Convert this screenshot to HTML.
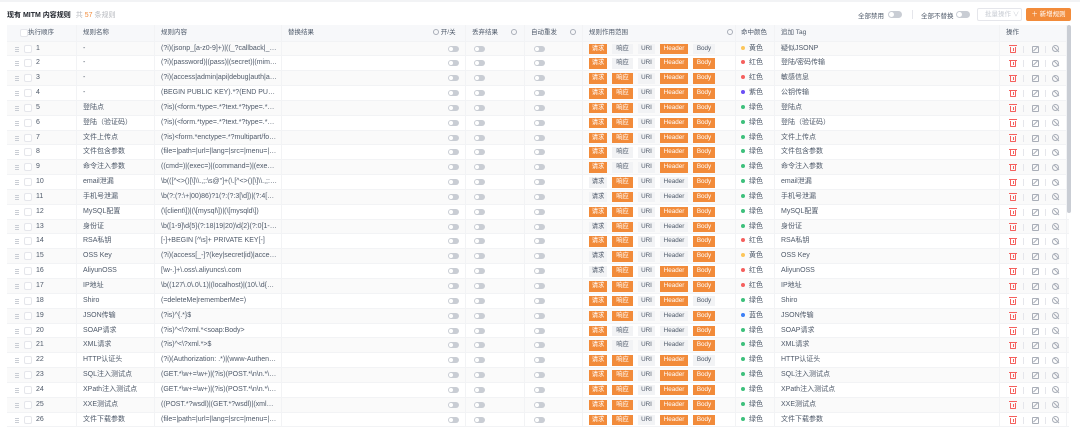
<!DOCTYPE html>
<html><head><meta charset="utf-8"><style>
*{box-sizing:border-box;margin:0;padding:0}
i,em{font-style:normal}
body{width:1080px;height:424px;overflow:hidden;background:#fff;font-family:"Liberation Sans","Noto Sans CJK SC",sans-serif;font-size:7px;color:#1d2129;position:relative}
.top{position:absolute;left:0;top:0;width:1080px;height:2px;background:#f2f3f5}
.title{position:absolute;left:7px;top:10px;font-size:7px;font-weight:bold;color:#1d2129}
.title span{font-weight:normal;color:#b5b8be;margin-left:5px}
.title em{color:#f28b3a}
.tr{position:absolute;top:10px;font-size:6.5px;color:#4e5969}
.sw{position:absolute;width:14px;height:7px;border-radius:4px;background:#c9cdd4}
.sw:after{content:"";position:absolute;left:1px;top:1px;width:5px;height:5px;border-radius:50%;background:#fff}
.batch{position:absolute;left:977px;top:8px;width:45px;height:13px;border:1px solid #e5e6eb;border-radius:2px;color:#c9cdd4;font-size:6.5px;line-height:11px;padding-left:7px}
.add{position:absolute;left:1026px;top:8px;width:45px;height:13px;background:#f28b3a;border-radius:2px;color:#fff;font-size:6.5px;line-height:13px;text-align:center}
.tbl{position:absolute;left:7px;top:25px;width:1062px}
.h,.r{display:flex;position:relative;border-bottom:1px solid #f2f3f5}
.h{height:16.5px;background:#f7f8fa;color:#4e5969;font-size:6.5px;line-height:15.5px}
.r{height:14.85px;line-height:13.8px;color:#4e5969}
.r:nth-child(odd){background:#fafafa}
.h>span,.r>span{display:block;height:100%;position:relative;white-space:nowrap;overflow:hidden;border-right:1px solid #f2f3f5}
.c{text-overflow:ellipsis;padding-right:4px}
.a{width:70px}.b{width:78px;padding-left:6px}.c{width:127px;padding-left:6px}.d{width:184px;padding-left:6px}.e{width:59px}.f{width:58px}.g{width:153px;padding-left:6px}.hh{width:39px;padding-left:5px}.k{width:225px;padding-left:6px}.l{width:67px}
.h .a{padding-left:21px}
.dr{position:absolute;left:8px;top:5px;width:4px;height:5px;border-top:1px solid #c9cdd4;border-bottom:1px solid #c9cdd4}
.dr:after{content:"";position:absolute;left:0;top:1px;width:4px;height:1px;background:#c9cdd4}
.cb{position:absolute;left:17px;top:3px;width:8px;height:8px;border:1px solid #e5e6eb;border-radius:2px;background:#fff}
.h .cb{left:13px;top:4px}
.n{position:absolute;left:29px}
.tg{position:absolute;top:4px;width:11px;height:6px;border-radius:3px;background:#c9cdd4}
.tg:after{content:"";position:absolute;left:1px;top:1px;width:4px;height:4px;border-radius:50%;background:#fff}
.d .tg{left:166px}.e .tg{left:8px}.f .tg{left:9px}
.q{display:inline-block;width:6px;height:6px;border:1px solid #a9aeb8;border-radius:50%;vertical-align:-1px}
.g b{display:inline-block;font-weight:normal;height:10.5px;line-height:10.5px;margin-top:2px;text-align:center;margin-right:5px;background:#f2f3f5;color:#4e5969;font-size:6.3px;vertical-align:top}
.g b.o{background:#f28b3a;color:#fff}
.w1{width:18px}.w2{width:21px}.w3{width:17px}.w4{width:28px}.w5{width:22px}
.dot{display:inline-block;width:4px;height:4px;border-radius:50%;margin-right:4px;vertical-align:0}
.Y{background:#fcc65b}.R{background:#f5605e}.P{background:#6b4ff5}.G{background:#3ec07c}.B{background:#3d7ff5}
.tr1{position:absolute;left:10px;top:5px;width:6px;height:6px;border:1px solid #f5605e;border-top:none;border-radius:0 0 1px 1px}
.tr1:before{content:"";position:absolute;left:-2px;top:-1.5px;width:8px;height:1px;background:#f5605e}
.tr1:after{content:"";position:absolute;left:1.5px;top:1px;width:1px;height:3px;background:#f5605e}
.ed{position:absolute;left:32px;top:4px;width:7px;height:7px;border:1px solid #a9aeb8;border-radius:1px}
.ed:after{content:"";position:absolute;left:2px;top:-1px;width:1px;height:6px;background:#a9aeb8;transform:rotate(45deg)}
.bn{position:absolute;left:52px;top:3.5px;width:7px;height:7px;border:1px solid #a9aeb8;border-radius:50%}
.bn:after{content:"";position:absolute;left:2.5px;top:-0.5px;width:1px;height:7px;background:#a9aeb8;transform:rotate(-45deg)}
.s1,.s2{position:absolute;top:4px;width:1px;height:7px;background:#e5e6eb}
.s1{left:23px}.s2{left:45px}
.sb{position:absolute;left:1067px;top:25px;width:4px;height:188px;border-radius:2px;background:#c9cdd4}
</style></head><body>
<div class="top"></div>
<div class="title">现有 MITM 内容规则<span>共 <em>57</em> 条规则</span></div>
<div class="tr" style="left:858px">全部禁用</div><div class="sw" style="left:888px;top:11px"></div>
<div style="position:absolute;left:912px;top:10px;width:1px;height:9px;background:#e5e6eb"></div>
<div class="tr" style="left:921px">全部不替换</div><div class="sw" style="left:956px;top:11px"></div>
<div class="batch">批量操作 ∨</div>
<div class="add">＋ 新增规则</div>
<div class="tbl">
<div class="h"><span class="a"><i class="cb"></i>执行顺序</span><span class="b">规则名称</span><span class="c">规则内容</span><span class="d">替换结果<em style="position:absolute;left:151px"><i class="q"></i> 开/关</em></span><span class="e" style="padding-left:6px">丢弃结果 <i class="q" style="margin-left:11px"></i></span><span class="f" style="padding-left:6px">自动重发 <i class="q" style="margin-left:11px"></i></span><span class="g">规则作用范围<i class="q" style="position:absolute;right:2px;top:4px"></i></span><span class="hh">命中颜色</span><span class="k">追加 Tag</span><span class="l" style="padding-left:6px">操作</span></div>
<div id="rows">
<div class="r"><span class="a"><i class="dr"></i><i class="cb"></i><i class="n">1</i></span><span class="b">-</span><span class="c">(?i)(jsonp_[a-z0-9]+)|((_?callback|_cb|_c...</span><span class="d"><i class="tg"></i></span><span class="e"><i class="tg"></i></span><span class="f"><i class="tg"></i></span><span class="g"><b class="w1 o">请求</b><b class="w2">响应</b><b class="w3">URI</b><b class="w4 o">Header</b><b class="w5">Body</b></span><span class="hh"><i class="dot Y"></i>黄色</span><span class="k">疑似JSONP</span><span class="l"><i class="tr1"></i><i class="s1"></i><i class="ed"></i><i class="s2"></i><i class="bn"></i></span></div>
<div class="r"><span class="a"><i class="dr"></i><i class="cb"></i><i class="n">2</i></span><span class="b">-</span><span class="c">(?i)(password)|(pass)|(secret)|(mima)|(['"...</span><span class="d"><i class="tg"></i></span><span class="e"><i class="tg"></i></span><span class="f"><i class="tg"></i></span><span class="g"><b class="w1 o">请求</b><b class="w2">响应</b><b class="w3">URI</b><b class="w4 o">Header</b><b class="w5 o">Body</b></span><span class="hh"><i class="dot R"></i>红色</span><span class="k">登陆/密码传输</span><span class="l"><i class="tr1"></i><i class="s1"></i><i class="ed"></i><i class="s2"></i><i class="bn"></i></span></div>
<div class="r"><span class="a"><i class="dr"></i><i class="cb"></i><i class="n">3</i></span><span class="b">-</span><span class="c">(?i)(access|admin|api|debug|auth|auth...</span><span class="d"><i class="tg"></i></span><span class="e"><i class="tg"></i></span><span class="f"><i class="tg"></i></span><span class="g"><b class="w1 o">请求</b><b class="w2 o">响应</b><b class="w3">URI</b><b class="w4 o">Header</b><b class="w5 o">Body</b></span><span class="hh"><i class="dot R"></i>红色</span><span class="k">敏感信息</span><span class="l"><i class="tr1"></i><i class="s1"></i><i class="ed"></i><i class="s2"></i><i class="bn"></i></span></div>
<div class="r"><span class="a"><i class="dr"></i><i class="cb"></i><i class="n">4</i></span><span class="b">-</span><span class="c">(BEGIN PUBLIC KEY).*?(END PUBLIC KEY)</span><span class="d"><i class="tg"></i></span><span class="e"><i class="tg"></i></span><span class="f"><i class="tg"></i></span><span class="g"><b class="w1 o">请求</b><b class="w2 o">响应</b><b class="w3">URI</b><b class="w4 o">Header</b><b class="w5 o">Body</b></span><span class="hh"><i class="dot P"></i>紫色</span><span class="k">公钥传输</span><span class="l"><i class="tr1"></i><i class="s1"></i><i class="ed"></i><i class="s2"></i><i class="bn"></i></span></div>
<div class="r"><span class="a"><i class="dr"></i><i class="cb"></i><i class="n">5</i></span><span class="b">登陆点</span><span class="c">(?is)(&lt;form.*type=.*?text.*?type=.*?pas...</span><span class="d"><i class="tg"></i></span><span class="e"><i class="tg"></i></span><span class="f"><i class="tg"></i></span><span class="g"><b class="w1 o">请求</b><b class="w2 o">响应</b><b class="w3">URI</b><b class="w4 o">Header</b><b class="w5 o">Body</b></span><span class="hh"><i class="dot G"></i>绿色</span><span class="k">登陆点</span><span class="l"><i class="tr1"></i><i class="s1"></i><i class="ed"></i><i class="s2"></i><i class="bn"></i></span></div>
<div class="r"><span class="a"><i class="dr"></i><i class="cb"></i><i class="n">6</i></span><span class="b">登陆（验证码）</span><span class="c">(?is)(&lt;form.*type=.*?text.*?type=.*?pas...</span><span class="d"><i class="tg"></i></span><span class="e"><i class="tg"></i></span><span class="f"><i class="tg"></i></span><span class="g"><b class="w1 o">请求</b><b class="w2 o">响应</b><b class="w3">URI</b><b class="w4 o">Header</b><b class="w5 o">Body</b></span><span class="hh"><i class="dot G"></i>绿色</span><span class="k">登陆（验证码）</span><span class="l"><i class="tr1"></i><i class="s1"></i><i class="ed"></i><i class="s2"></i><i class="bn"></i></span></div>
<div class="r"><span class="a"><i class="dr"></i><i class="cb"></i><i class="n">7</i></span><span class="b">文件上传点</span><span class="c">(?is)&lt;form.*enctype=.*?multipart/form...</span><span class="d"><i class="tg"></i></span><span class="e"><i class="tg"></i></span><span class="f"><i class="tg"></i></span><span class="g"><b class="w1 o">请求</b><b class="w2 o">响应</b><b class="w3">URI</b><b class="w4 o">Header</b><b class="w5 o">Body</b></span><span class="hh"><i class="dot G"></i>绿色</span><span class="k">文件上传点</span><span class="l"><i class="tr1"></i><i class="s1"></i><i class="ed"></i><i class="s2"></i><i class="bn"></i></span></div>
<div class="r"><span class="a"><i class="dr"></i><i class="cb"></i><i class="n">8</i></span><span class="b">文件包含参数</span><span class="c">(file=|path=|url=|lang=|src=|menu=|m...</span><span class="d"><i class="tg"></i></span><span class="e"><i class="tg"></i></span><span class="f"><i class="tg"></i></span><span class="g"><b class="w1 o">请求</b><b class="w2">响应</b><b class="w3">URI</b><b class="w4 o">Header</b><b class="w5 o">Body</b></span><span class="hh"><i class="dot G"></i>绿色</span><span class="k">文件包含参数</span><span class="l"><i class="tr1"></i><i class="s1"></i><i class="ed"></i><i class="s2"></i><i class="bn"></i></span></div>
<div class="r"><span class="a"><i class="dr"></i><i class="cb"></i><i class="n">9</i></span><span class="b">命令注入参数</span><span class="c">((cmd=)|(exec=)|(command=)|(execute...</span><span class="d"><i class="tg"></i></span><span class="e"><i class="tg"></i></span><span class="f"><i class="tg"></i></span><span class="g"><b class="w1 o">请求</b><b class="w2">响应</b><b class="w3">URI</b><b class="w4 o">Header</b><b class="w5 o">Body</b></span><span class="hh"><i class="dot G"></i>绿色</span><span class="k">命令注入参数</span><span class="l"><i class="tr1"></i><i class="s1"></i><i class="ed"></i><i class="s2"></i><i class="bn"></i></span></div>
<div class="r"><span class="a"><i class="dr"></i><i class="cb"></i><i class="n">10</i></span><span class="b">email泄漏</span><span class="c">\b(([^&lt;&gt;()[\]\\.,;:\s@"]+(\.[^&lt;&gt;()[\]\\.,;:\...</span><span class="d"><i class="tg"></i></span><span class="e"><i class="tg"></i></span><span class="f"><i class="tg"></i></span><span class="g"><b class="w1">请求</b><b class="w2 o">响应</b><b class="w3">URI</b><b class="w4">Header</b><b class="w5 o">Body</b></span><span class="hh"><i class="dot G"></i>绿色</span><span class="k">email泄漏</span><span class="l"><i class="tr1"></i><i class="s1"></i><i class="ed"></i><i class="s2"></i><i class="bn"></i></span></div>
<div class="r"><span class="a"><i class="dr"></i><i class="cb"></i><i class="n">11</i></span><span class="b">手机号泄漏</span><span class="c">\b(?:(?:\+|00)86)?1(?:(?:3[\d])|(?:4[5-79])...</span><span class="d"><i class="tg"></i></span><span class="e"><i class="tg"></i></span><span class="f"><i class="tg"></i></span><span class="g"><b class="w1">请求</b><b class="w2 o">响应</b><b class="w3">URI</b><b class="w4">Header</b><b class="w5 o">Body</b></span><span class="hh"><i class="dot G"></i>绿色</span><span class="k">手机号泄漏</span><span class="l"><i class="tr1"></i><i class="s1"></i><i class="ed"></i><i class="s2"></i><i class="bn"></i></span></div>
<div class="r"><span class="a"><i class="dr"></i><i class="cb"></i><i class="n">12</i></span><span class="b">MySQL配置</span><span class="c">(\[client\])|(\[mysql\])|(\[mysqld\])</span><span class="d"><i class="tg"></i></span><span class="e"><i class="tg"></i></span><span class="f"><i class="tg"></i></span><span class="g"><b class="w1 o">请求</b><b class="w2 o">响应</b><b class="w3">URI</b><b class="w4 o">Header</b><b class="w5 o">Body</b></span><span class="hh"><i class="dot G"></i>绿色</span><span class="k">MySQL配置</span><span class="l"><i class="tr1"></i><i class="s1"></i><i class="ed"></i><i class="s2"></i><i class="bn"></i></span></div>
<div class="r"><span class="a"><i class="dr"></i><i class="cb"></i><i class="n">13</i></span><span class="b">身份证</span><span class="c">\b([1-9]\d{5}(?:18|19|20)\d{2}(?:0[1-9]|10...</span><span class="d"><i class="tg"></i></span><span class="e"><i class="tg"></i></span><span class="f"><i class="tg"></i></span><span class="g"><b class="w1">请求</b><b class="w2 o">响应</b><b class="w3">URI</b><b class="w4">Header</b><b class="w5 o">Body</b></span><span class="hh"><i class="dot G"></i>绿色</span><span class="k">身份证</span><span class="l"><i class="tr1"></i><i class="s1"></i><i class="ed"></i><i class="s2"></i><i class="bn"></i></span></div>
<div class="r"><span class="a"><i class="dr"></i><i class="cb"></i><i class="n">14</i></span><span class="b">RSA私钥</span><span class="c">[-]+BEGIN [^\s]+ PRIVATE KEY[-]</span><span class="d"><i class="tg"></i></span><span class="e"><i class="tg"></i></span><span class="f"><i class="tg"></i></span><span class="g"><b class="w1 o">请求</b><b class="w2 o">响应</b><b class="w3">URI</b><b class="w4">Header</b><b class="w5 o">Body</b></span><span class="hh"><i class="dot R"></i>红色</span><span class="k">RSA私钥</span><span class="l"><i class="tr1"></i><i class="s1"></i><i class="ed"></i><i class="s2"></i><i class="bn"></i></span></div>
<div class="r"><span class="a"><i class="dr"></i><i class="cb"></i><i class="n">15</i></span><span class="b">OSS Key</span><span class="c">(?i)(access[_-]?(key|secret|id)|accesskey(...</span><span class="d"><i class="tg"></i></span><span class="e"><i class="tg"></i></span><span class="f"><i class="tg"></i></span><span class="g"><b class="w1">请求</b><b class="w2 o">响应</b><b class="w3">URI</b><b class="w4">Header</b><b class="w5 o">Body</b></span><span class="hh"><i class="dot Y"></i>黄色</span><span class="k">OSS Key</span><span class="l"><i class="tr1"></i><i class="s1"></i><i class="ed"></i><i class="s2"></i><i class="bn"></i></span></div>
<div class="r"><span class="a"><i class="dr"></i><i class="cb"></i><i class="n">16</i></span><span class="b">AliyunOSS</span><span class="c">[\w-.]+\.oss\.aliyuncs\.com</span><span class="d"><i class="tg"></i></span><span class="e"><i class="tg"></i></span><span class="f"><i class="tg"></i></span><span class="g"><b class="w1">请求</b><b class="w2 o">响应</b><b class="w3">URI</b><b class="w4 o">Header</b><b class="w5 o">Body</b></span><span class="hh"><i class="dot R"></i>红色</span><span class="k">AliyunOSS</span><span class="l"><i class="tr1"></i><i class="s1"></i><i class="ed"></i><i class="s2"></i><i class="bn"></i></span></div>
<div class="r"><span class="a"><i class="dr"></i><i class="cb"></i><i class="n">17</i></span><span class="b">IP地址</span><span class="c">\b((127\.0\.0\.1)|(localhost)|(10\.\d{1,3}\...</span><span class="d"><i class="tg"></i></span><span class="e"><i class="tg"></i></span><span class="f"><i class="tg"></i></span><span class="g"><b class="w1 o">请求</b><b class="w2 o">响应</b><b class="w3">URI</b><b class="w4 o">Header</b><b class="w5 o">Body</b></span><span class="hh"><i class="dot R"></i>红色</span><span class="k">IP地址</span><span class="l"><i class="tr1"></i><i class="s1"></i><i class="ed"></i><i class="s2"></i><i class="bn"></i></span></div>
<div class="r"><span class="a"><i class="dr"></i><i class="cb"></i><i class="n">18</i></span><span class="b">Shiro</span><span class="c">(=deleteMe|rememberMe=)</span><span class="d"><i class="tg"></i></span><span class="e"><i class="tg"></i></span><span class="f"><i class="tg"></i></span><span class="g"><b class="w1 o">请求</b><b class="w2 o">响应</b><b class="w3">URI</b><b class="w4 o">Header</b><b class="w5">Body</b></span><span class="hh"><i class="dot G"></i>绿色</span><span class="k">Shiro</span><span class="l"><i class="tr1"></i><i class="s1"></i><i class="ed"></i><i class="s2"></i><i class="bn"></i></span></div>
<div class="r"><span class="a"><i class="dr"></i><i class="cb"></i><i class="n">19</i></span><span class="b">JSON传输</span><span class="c">(?is)^{.*}$</span><span class="d"><i class="tg"></i></span><span class="e"><i class="tg"></i></span><span class="f"><i class="tg"></i></span><span class="g"><b class="w1 o">请求</b><b class="w2 o">响应</b><b class="w3">URI</b><b class="w4">Header</b><b class="w5 o">Body</b></span><span class="hh"><i class="dot B"></i>蓝色</span><span class="k">JSON传输</span><span class="l"><i class="tr1"></i><i class="s1"></i><i class="ed"></i><i class="s2"></i><i class="bn"></i></span></div>
<div class="r"><span class="a"><i class="dr"></i><i class="cb"></i><i class="n">20</i></span><span class="b">SOAP请求</span><span class="c">(?is)^&lt;\?xml.*&lt;soap:Body&gt;</span><span class="d"><i class="tg"></i></span><span class="e"><i class="tg"></i></span><span class="f"><i class="tg"></i></span><span class="g"><b class="w1 o">请求</b><b class="w2">响应</b><b class="w3">URI</b><b class="w4">Header</b><b class="w5 o">Body</b></span><span class="hh"><i class="dot G"></i>绿色</span><span class="k">SOAP请求</span><span class="l"><i class="tr1"></i><i class="s1"></i><i class="ed"></i><i class="s2"></i><i class="bn"></i></span></div>
<div class="r"><span class="a"><i class="dr"></i><i class="cb"></i><i class="n">21</i></span><span class="b">XML请求</span><span class="c">(?is)^&lt;\?xml.*&gt;$</span><span class="d"><i class="tg"></i></span><span class="e"><i class="tg"></i></span><span class="f"><i class="tg"></i></span><span class="g"><b class="w1 o">请求</b><b class="w2">响应</b><b class="w3">URI</b><b class="w4">Header</b><b class="w5 o">Body</b></span><span class="hh"><i class="dot G"></i>绿色</span><span class="k">XML请求</span><span class="l"><i class="tr1"></i><i class="s1"></i><i class="ed"></i><i class="s2"></i><i class="bn"></i></span></div>
<div class="r"><span class="a"><i class="dr"></i><i class="cb"></i><i class="n">22</i></span><span class="b">HTTP认证头</span><span class="c">(?i)(Authorization: .*)|(www-Authentica...</span><span class="d"><i class="tg"></i></span><span class="e"><i class="tg"></i></span><span class="f"><i class="tg"></i></span><span class="g"><b class="w1 o">请求</b><b class="w2 o">响应</b><b class="w3">URI</b><b class="w4 o">Header</b><b class="w5">Body</b></span><span class="hh"><i class="dot G"></i>绿色</span><span class="k">HTTP认证头</span><span class="l"><i class="tr1"></i><i class="s1"></i><i class="ed"></i><i class="s2"></i><i class="bn"></i></span></div>
<div class="r"><span class="a"><i class="dr"></i><i class="cb"></i><i class="n">23</i></span><span class="b">SQL注入测试点</span><span class="c">(GET.*\w+=\w+)|(?is)(POST.*\n\n.*\w+...</span><span class="d"><i class="tg"></i></span><span class="e"><i class="tg"></i></span><span class="f"><i class="tg"></i></span><span class="g"><b class="w1 o">请求</b><b class="w2 o">响应</b><b class="w3">URI</b><b class="w4 o">Header</b><b class="w5 o">Body</b></span><span class="hh"><i class="dot G"></i>绿色</span><span class="k">SQL注入测试点</span><span class="l"><i class="tr1"></i><i class="s1"></i><i class="ed"></i><i class="s2"></i><i class="bn"></i></span></div>
<div class="r"><span class="a"><i class="dr"></i><i class="cb"></i><i class="n">24</i></span><span class="b">XPath注入测试点</span><span class="c">(GET.*\w+=\w+)|(?is)(POST.*\n\n.*\w+...</span><span class="d"><i class="tg"></i></span><span class="e"><i class="tg"></i></span><span class="f"><i class="tg"></i></span><span class="g"><b class="w1 o">请求</b><b class="w2 o">响应</b><b class="w3">URI</b><b class="w4 o">Header</b><b class="w5 o">Body</b></span><span class="hh"><i class="dot G"></i>绿色</span><span class="k">XPath注入测试点</span><span class="l"><i class="tr1"></i><i class="s1"></i><i class="ed"></i><i class="s2"></i><i class="bn"></i></span></div>
<div class="r"><span class="a"><i class="dr"></i><i class="cb"></i><i class="n">25</i></span><span class="b">XXE测试点</span><span class="c">((POST.*?wsdl)|(GET.*?wsdl)|(xml=)|(&lt;\?...</span><span class="d"><i class="tg"></i></span><span class="e"><i class="tg"></i></span><span class="f"><i class="tg"></i></span><span class="g"><b class="w1 o">请求</b><b class="w2 o">响应</b><b class="w3">URI</b><b class="w4 o">Header</b><b class="w5 o">Body</b></span><span class="hh"><i class="dot G"></i>绿色</span><span class="k">XXE测试点</span><span class="l"><i class="tr1"></i><i class="s1"></i><i class="ed"></i><i class="s2"></i><i class="bn"></i></span></div>
<div class="r"><span class="a"><i class="dr"></i><i class="cb"></i><i class="n">26</i></span><span class="b">文件下载参数</span><span class="c">(file=|path=|url=|lang=|src=|menu=|m...</span><span class="d"><i class="tg"></i></span><span class="e"><i class="tg"></i></span><span class="f"><i class="tg"></i></span><span class="g"><b class="w1 o">请求</b><b class="w2 o">响应</b><b class="w3">URI</b><b class="w4 o">Header</b><b class="w5 o">Body</b></span><span class="hh"><i class="dot G"></i>绿色</span><span class="k">文件下载参数</span><span class="l"><i class="tr1"></i><i class="s1"></i><i class="ed"></i><i class="s2"></i><i class="bn"></i></span></div>
</div>
</div>
<div class="sb"></div>
</body></html>
